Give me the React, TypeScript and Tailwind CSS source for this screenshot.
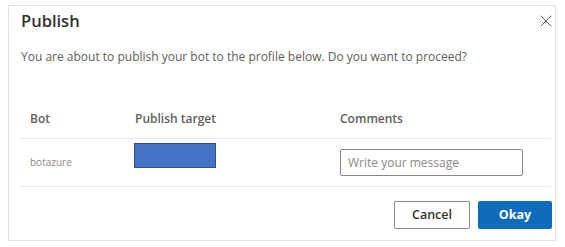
import { X } from "lucide-react";

export default function App() {
  return (
    <div className="w-[565px] h-[247px] bg-white pt-[5px] pl-[8px] font-['Open_Sans',sans-serif]">
      <div className="w-[548px] h-[236px] border border-[#e3e3e3] flex flex-col">
        {/* Header */}
        <div className="flex items-center justify-between pt-[4px] pl-[12px]">
          <h1 className="text-[16.5px] leading-[22px] font-semibold text-[#323130]">
            Publish
          </h1>
          <X size={20} strokeWidth={1.2} className="text-[#605e5c] -mr-[1px]" />
        </div>

        <p className="mt-[17px] pl-[12px] text-[12px] leading-[16px] text-[#605e5c]">
          You are about to publish your bot to the profile below. Do you want to proceed?
        </p>

        {/* Table */}
        <div className="mt-[46px] ml-[11px] w-[531px]">
          <div className="grid grid-cols-[105px_205px_1fr] pb-[11px] border-b border-[#edebe9] text-[12px] leading-[16px] font-semibold text-[#605e5c]">
            <div className="pl-[10px]">Bot</div>
            <div className="pl-[10px]">Publish target</div>
            <div className="pl-[10px]">Comments</div>
          </div>
          <div className="grid grid-cols-[105px_205px_1fr] h-[48px] border-b border-[#edebe9]">
            <div className="pl-[10px] pt-[15px] text-[10px] leading-[16px] text-[#8a8886]">
              botazure
            </div>
            <div className="pl-[9px] pt-[4px]">
              <div className="w-[82px] h-[25px] bg-[#4472c4] border border-[#2f528f]" />
            </div>
            <div className="pl-[10px] pt-[10px]">
              <input
                placeholder="Write your message"
                className="w-[183px] h-[27px] border border-[#8a8886] rounded-[2px] px-[7px] text-[12px] text-[#323130] placeholder:text-[#8a8886] outline-none"
              />
            </div>
          </div>
        </div>

        {/* Footer */}
        <div className="flex justify-end gap-[8px] mt-[14px] pr-[3px]">
          <button className="w-[76px] h-[28px] border border-[#8a8886] rounded-[2px] bg-white text-[12.5px] font-semibold text-[#323130]">
            Cancel
          </button>
          <button className="w-[74px] h-[28px] rounded-[2px] bg-[#0f6cbd] text-[12.5px] font-bold text-white">
            Okay
          </button>
        </div>
      </div>
    </div>
  );
}
